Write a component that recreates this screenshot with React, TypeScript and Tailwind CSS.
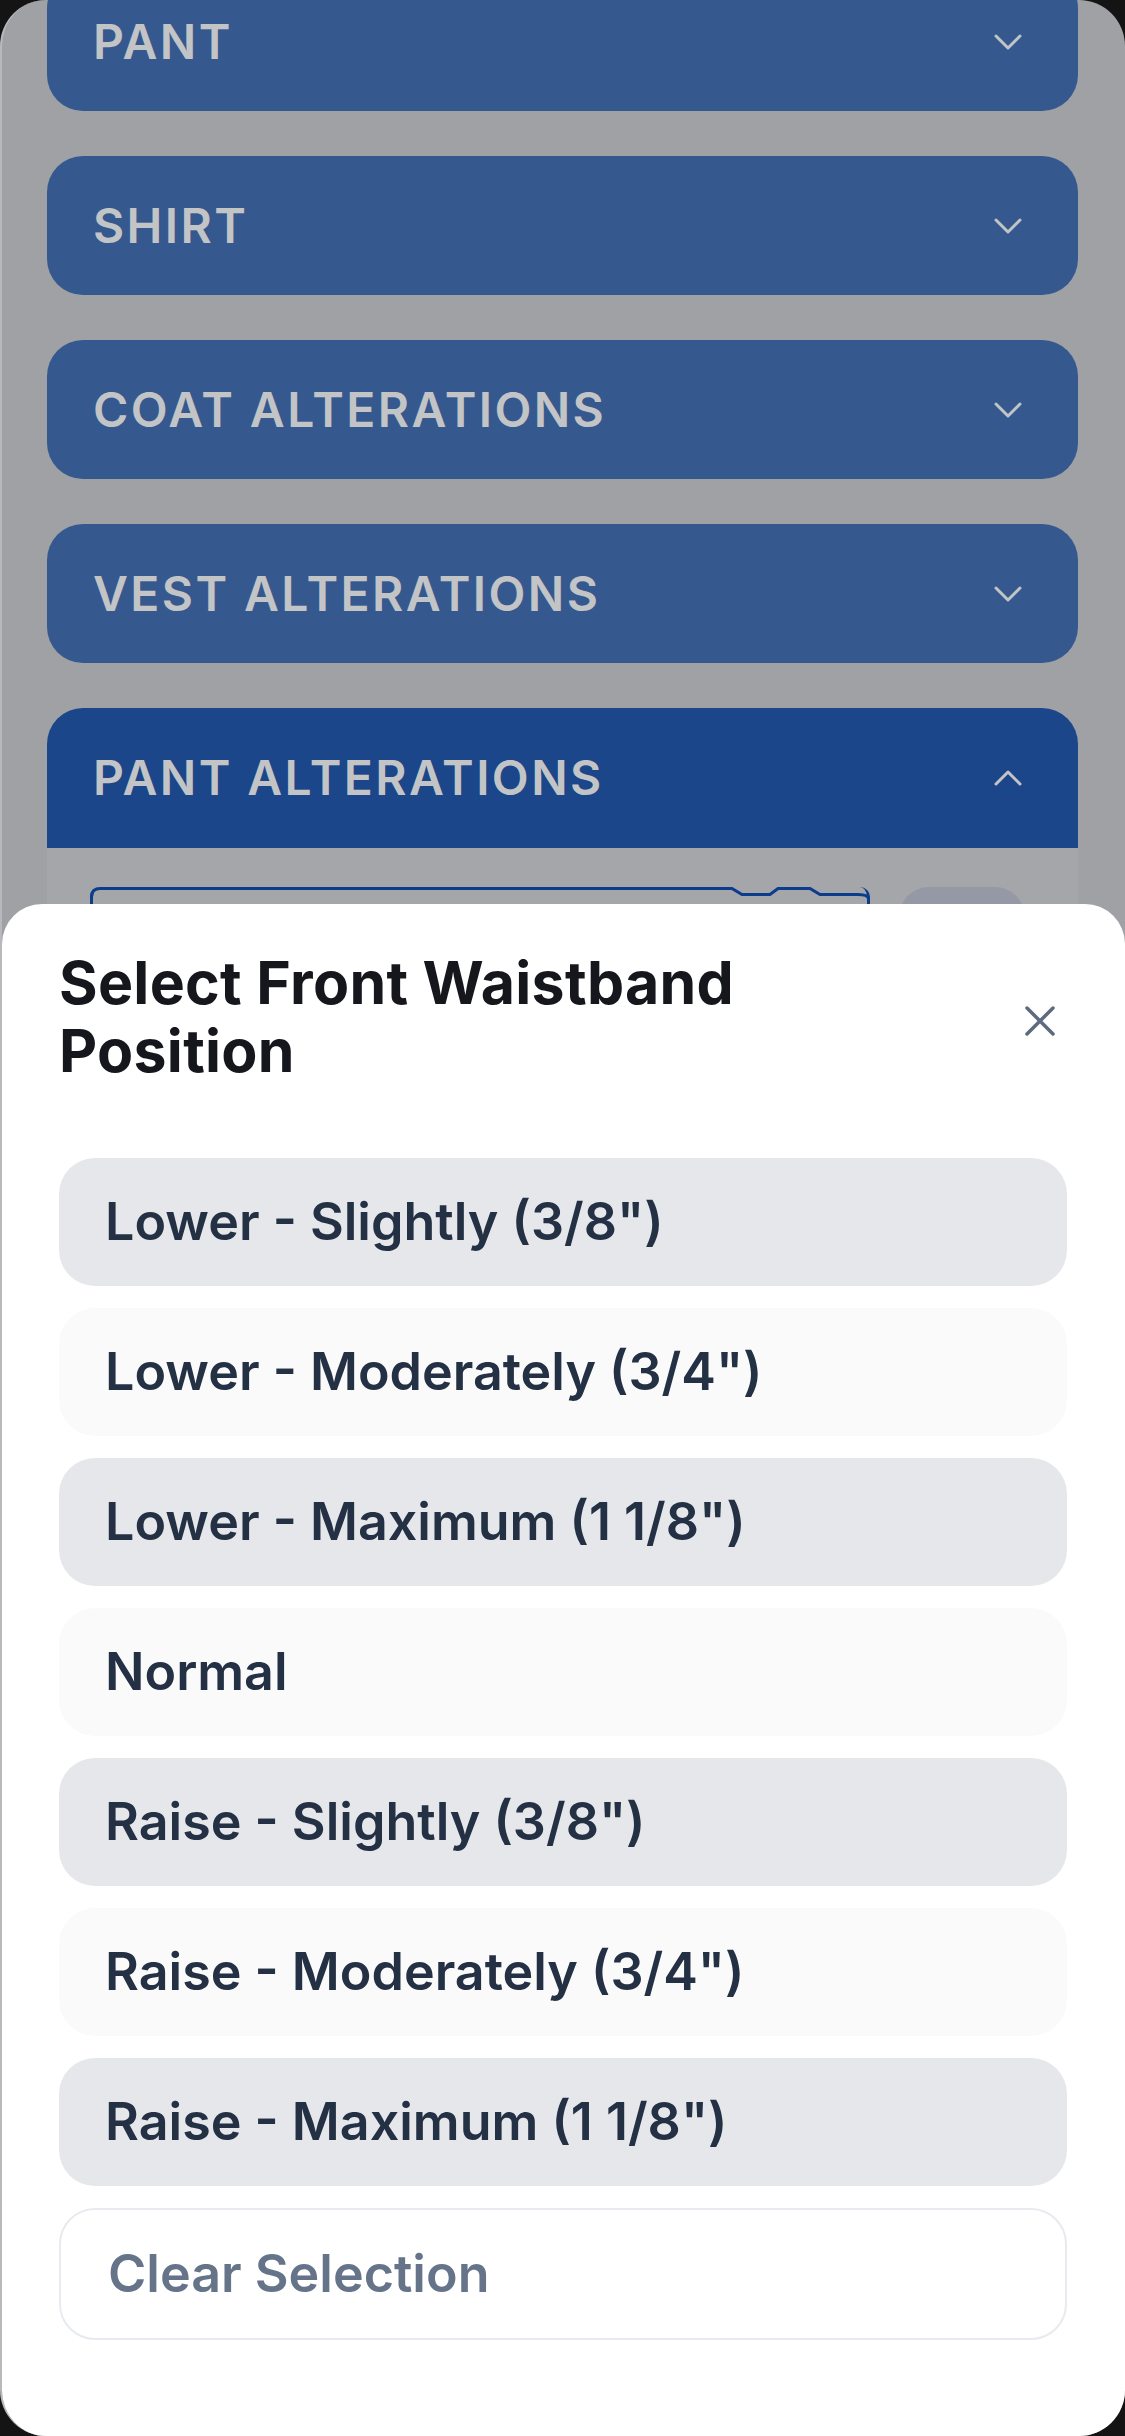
import React from 'react';

const sections = ['PANT', 'SHIRT', 'COAT ALTERATIONS', 'VEST ALTERATIONS'];

const options = [
    'Lower - Slightly (3/8")',
    'Lower - Moderately (3/4")',
    'Lower - Maximum (1 1/8")',
    'Normal',
    'Raise - Slightly (3/8")',
    'Raise - Moderately (3/4")',
    'Raise - Maximum (1 1/8")',
];

function Chevron({ up = false }: { up?: boolean }) {
    return (
        <svg width="28" height="16" viewBox="0 0 28 16" fill="none" className="shrink-0">
            <path
                d={up ? 'M2 14 L14 2 L26 14' : 'M2 2 L14 14 L26 2'}
                stroke="#c3c4c6"
                strokeWidth="3"
                strokeLinecap="round"
                strokeLinejoin="round"
            />
        </svg>
    );
}

function SectionHeader({ title }: { title: string }) {
    return (
        <div className="flex h-[139px] items-center justify-between rounded-[36px] bg-[#35598f] pl-[46px] pr-[56px]">
            <span className="text-[48px] font-semibold tracking-[0.05em] text-[#c3c4c6]">{title}</span>
            <Chevron />
        </div>
    );
}

export default function App() {
    return (
        <div
            className="h-[2436px] w-[1125px] overflow-hidden bg-[#141414]"
            style={{ fontFamily: 'Inter, "Noto Sans", sans-serif' }}
        >
            <div className="relative h-full overflow-hidden rounded-[46px] border-l-2 border-[#b8b9bc] bg-[#a0a1a5]">
                {/* Backdrop: accordion list dimmed behind the sheet */}
                <div className="-mt-[28px] flex flex-col gap-[45px] pl-[45px] pr-[47px]">
                    {sections.map((s) => (
                        <SectionHeader key={s} title={s} />
                    ))}

                    <div className="overflow-hidden rounded-t-[36px]">
                        <div className="flex h-[140px] items-center justify-between bg-[#1b4689] pl-[46px] pr-[56px]">
                            <span className="text-[48px] font-semibold tracking-[0.05em] text-[#c3c4c6]">
                                PANT ALTERATIONS
                            </span>
                            <Chevron up />
                        </div>
                        <div className="flex h-[200px] gap-[29px] bg-[#a5a6aa] pl-[43px] pr-[53px] pt-[39px]">
                            <div className="relative h-[130px] w-[780px] rounded-[10px] border-[3px] border-t-0 border-[#0c3c8c]">
                                <svg
                                    className="absolute -left-[3px] top-0 h-[12px] w-[780px]"
                                    viewBox="0 0 780 12"
                                    fill="none"
                                >
                                    <path
                                        d="M1.5 12 L1.5 10 Q1.5 1.5 10 1.5 L642 1.5 L652 7.5 L680 7.5 L688 1.5 L720 1.5 L730 7.5 L768 7.5 Q778.5 7.5 778.5 12"
                                        stroke="#0c3c8c"
                                        strokeWidth="3"
                                    />
                                </svg>
                            </div>
                            <div className="h-[110px] w-[126px] rounded-[30px] bg-[#9599a6]" />
                        </div>
                    </div>
                </div>

                {/* Bottom sheet */}
                <div className="absolute inset-x-0 bottom-0 top-[904px] rounded-t-[40px] bg-white pl-[57px] pr-[58px] pt-[45px]">
                    <div className="flex items-center justify-between">
                        <h2 className="w-[800px] text-[59px] font-bold leading-[68px] tracking-[0.005em] text-[#15171d]">
                            Select Front Waistband Position
                        </h2>
                        <svg width="32" height="32" viewBox="0 0 32 32" fill="none" className="mr-[11px] mt-[8px]">
                            <path
                                d="M3 3 L29 29 M29 3 L3 29"
                                stroke="#5d6b7e"
                                strokeWidth="3.5"
                                strokeLinecap="round"
                            />
                        </svg>
                    </div>

                    <div className="mt-[73px] flex flex-col gap-[22px]">
                        {options.map((o, i) => (
                            <button
                                key={o}
                                className={`flex h-[128px] items-center rounded-[36px] pl-[46px] text-left text-[52px] font-semibold text-[#243043] ${
                                    i % 2 === 0 ? 'bg-[#e5e7eb]' : 'bg-[#fafafa]'
                                }`}
                            >
                                {o}
                            </button>
                        ))}
                        <button className="flex h-[132px] items-center rounded-[36px] border-2 border-[#e7eaee] bg-white pl-[47px] text-left text-[52px] font-semibold text-[#66748a]">
                            Clear Selection
                        </button>
                    </div>
                </div>
            </div>
        </div>
    );
}
